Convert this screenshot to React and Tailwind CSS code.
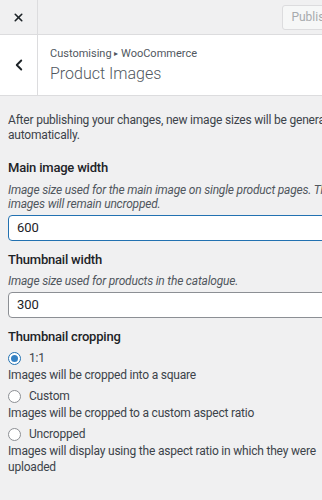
import { X, ChevronLeft } from 'lucide-react'

const font = { fontFamily: 'Roboto, "Noto Sans", sans-serif' }

function Radio({ checked, label }) {
  return (
    <div className="flex items-center gap-[8px] h-[18px]">
      <span
        className={`w-[13px] h-[13px] rounded-full border flex items-center justify-center bg-white ${
          checked ? 'border-[#2271b1]' : 'border-[#8c8f94]'
        }`}
      >
        {checked && <span className="w-[7px] h-[7px] rounded-full bg-[#3582c4]" />}
      </span>
      <span className="text-[12px] tracking-[-0.2px] text-[#3c434a]">{label}</span>
    </div>
  )
}

export default function App() {
  return (
    <div className="w-[322px] h-[500px] bg-[#f0f0f1] overflow-hidden" style={font}>
      {/* Top bar */}
      <div className="h-[35px] flex border-b border-[#dcdcde]">
        <div className="w-[38px] flex items-center justify-center border-r border-[#dcdcde] text-[#1d2327]">
          <X size={13} strokeWidth={3} />
        </div>
        <div className="flex-1 flex items-center justify-end overflow-hidden">
          <div className="h-[25px] ml-auto mr-[-20px] pl-[8px] pr-[10px] flex items-center rounded-[3px] border border-[#dcdcde] bg-[#f6f7f7] text-[12px] text-[#a7aaad]">
            Publish
          </div>
        </div>
      </div>

      {/* Section header */}
      <div className="h-[61px] flex bg-white border-b border-[#dcdcde]">
        <div className="w-[38px] flex items-center justify-center border-r border-[#dcdcde] text-[#1d2327]">
          <ChevronLeft size={18} strokeWidth={2.5} />
        </div>
        <div className="flex flex-col justify-center pl-[12px] pt-[2px]">
          <div className="text-[11px] leading-[16px] text-[#50575e]">
            Customising <span className="text-[8px] align-middle">▸</span> WooCommerce
          </div>
          <div className="text-[16px] leading-[24px] font-light text-[#50575e]">Product Images</div>
        </div>
      </div>

      {/* Body */}
      <div className="pl-[8px] pt-[17px] whitespace-nowrap overflow-hidden tracking-[-0.2px]">
        <p className="text-[12px] leading-[15px] text-[#3c434a]">
          After publishing your changes, new image sizes will be generated
          <br />
          automatically.
        </p>

        <div className="mt-[15px] text-[13px] leading-[20px] font-medium text-[#1d2327]">Main image width</div>
        <p className="mt-[5px] text-[12px] leading-[14px] italic text-[#50575e]">
          Image size used for the main image on single product pages. These
          <br />
          images will remain uncropped.
        </p>
        <div className="mt-[4px] h-[26px] w-[330px] rounded-[4px] border-[1.5px] border-[#2271b1] bg-white flex items-center pl-[8px] text-[13px] tracking-normal text-[#1d2327]">
          600
        </div>

        <div className="mt-[9px] text-[13px] leading-[20px] font-medium text-[#1d2327]">Thumbnail width</div>
        <p className="mt-[4px] text-[12px] leading-[14px] italic text-[#50575e]">
          Image size used for products in the catalogue.
        </p>
        <div className="mt-[4px] h-[26px] w-[330px] rounded-[4px] border border-[#8c8f94] bg-white flex items-center pl-[8px] text-[13px] tracking-normal text-[#1d2327]">
          300
        </div>

        <div className="mt-[9px] text-[13px] leading-[20px] font-medium text-[#1d2327]">Thumbnail cropping</div>
        <div className="mt-[2px]">
          <Radio checked label="1:1" />
          <p className="text-[12px] leading-[16px] text-[#3c434a]">Images will be cropped into a square</p>
          <div className="mt-[4px]">
            <Radio label="Custom" />
          </div>
          <p className="text-[12px] leading-[16px] text-[#3c434a]">Images will be cropped to a custom aspect ratio</p>
          <div className="mt-[4px]">
            <Radio label="Uncropped" />
          </div>
          <p className="text-[12px] leading-[16px] text-[#3c434a]">
            Images will display using the aspect ratio in which they were
            <br />
            uploaded
          </p>
        </div>
      </div>
    </div>
  )
}
